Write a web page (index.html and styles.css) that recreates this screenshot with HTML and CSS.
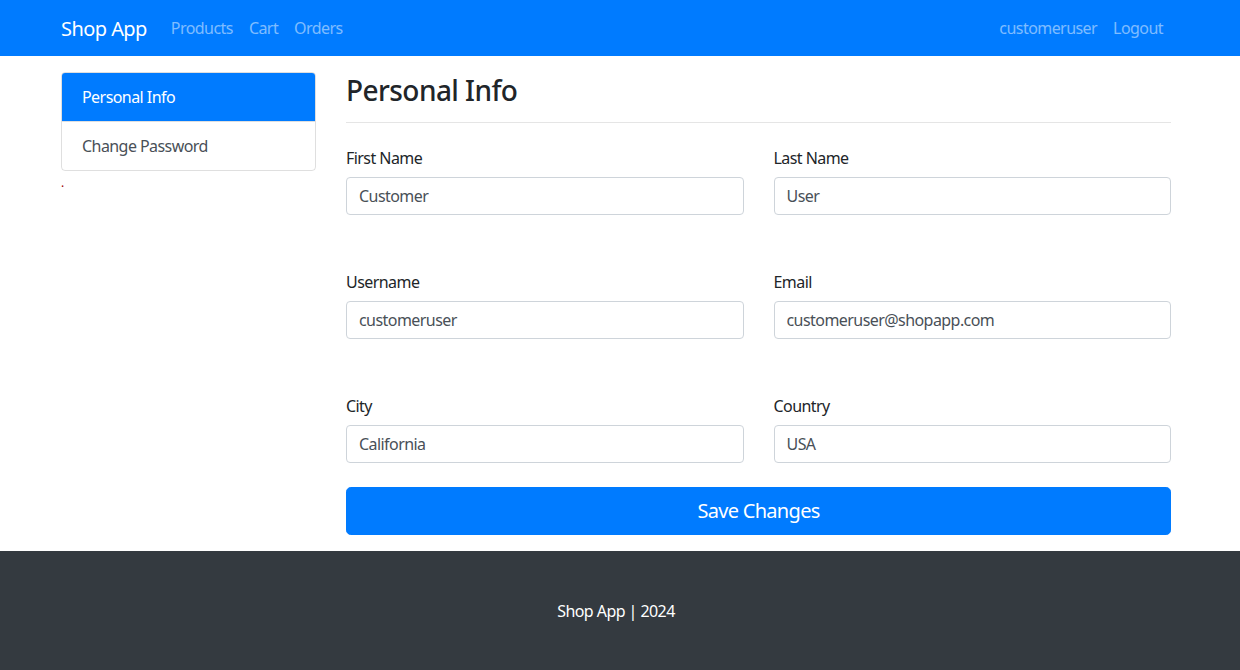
FILE: index.html
```html
<!DOCTYPE html>
<html lang="en">
<head>
<meta charset="utf-8">
<title>Shop App</title>
<link rel="stylesheet" href="styles.css">
</head>
<body>
<nav class="navbar">
  <div class="container nav-inner">
    <a class="brand" href="#">Shop App</a>
    <ul class="nav-links">
      <li><a href="#">Products</a></li>
      <li><a href="#">Cart</a></li>
      <li><a href="#">Orders</a></li>
    </ul>
    <ul class="nav-links nav-right">
      <li><a href="#">customeruser</a></li>
      <li><a href="#">Logout</a></li>
    </ul>
  </div>
</nav>
<main class="container content">
  <aside class="sidebar">
    <div class="list-group">
      <a class="list-item active" href="#">Personal Info</a>
      <a class="list-item" href="#">Change Password</a>
    </div>
    <span class="dot">.</span>
  </aside>
  <section class="main">
    <h3 class="title">Personal Info</h3>
    <form class="form">
      <div class="field">
        <label>First Name</label>
        <input class="input" type="text" value="Customer">
      </div>
      <div class="field">
        <label>Last Name</label>
        <input class="input" type="text" value="User">
      </div>
      <div class="field">
        <label>Username</label>
        <input class="input" type="text" value="customeruser">
      </div>
      <div class="field">
        <label>Email</label>
        <input class="input" type="text" value="customeruser@shopapp.com">
      </div>
      <div class="field">
        <label>City</label>
        <input class="input" type="text" value="California">
      </div>
      <div class="field">
        <label>Country</label>
        <input class="input" type="text" value="USA">
      </div>
      <button class="btn" type="button">Save Changes</button>
    </form>
  </section>
</main>
<footer class="footer">
  <p>Shop App | 2024</p>
</footer>
</body>
</html>
```

FILE: styles.css
```css
* { box-sizing: border-box; }
html, body { margin: 0; padding: 0; }
body {
  font-family: "Segoe UI", "Noto Sans", "Open Sans", sans-serif;
  font-size: 16px;
  line-height: 1.5;
  letter-spacing: -0.035em;
  color: #212529;
  background: #fff;
}
a { text-decoration: none; }
.container {
  width: 1110px;
  margin-left: calc(50% - 559px);
}
.navbar {
  background: #007bff;
  height: 56px;
}
.nav-inner {
  display: flex;
  align-items: center;
  height: 56px;
}
.brand {
  color: #fff;
  font-size: 20px;
  line-height: 30px;
  margin-right: 16px;
  padding-top: 2px;
}
.nav-links {
  display: flex;
  list-style: none;
  margin: 0;
  padding: 0;
}
.nav-links a {
  display: block;
  padding: 8px;
  color: rgba(255,255,255,0.5);
}
.nav-right { margin-left: auto; }
.content {
  display: flex;
  gap: 30px;
  margin-top: 16px;
  margin-bottom: 16px;
}
.sidebar { width: 255px; flex: none; }
.list-group {
  display: flex;
  flex-direction: column;
  border: 1px solid rgba(0,0,0,0.125);
  border-radius: 4px;
  overflow: hidden;
}
.list-item {
  display: block;
  padding: 12px 20px;
  color: #495057;
}
.list-item + .list-item { border-top: 1px solid rgba(0,0,0,0.125); }
.list-item.active {
  background: #007bff;
  color: #fff;
  margin: -1px -1px 0;
  padding: 13px 21px 12px;
  border-radius: 4px 4px 0 0;
}
.dot {
  display: block;
  color: #9b0000;
  font-size: 12px;
  line-height: 12px;
  margin-top: 6px;
}
.main { flex: 1; }
.title {
  font-size: 28px;
  font-weight: 500;
  line-height: 1.2;
  margin: 0;
  padding-top: 2px;
  padding-bottom: 14px;
  border-bottom: 1px solid rgba(0,0,0,0.1);
}
.form {
  display: grid;
  grid-template-columns: 1fr 1fr;
  column-gap: 30px;
  row-gap: 54px;
  margin-top: 22px;
}
.field label {
  display: block;
  padding-top: 1px;
  margin-bottom: 7px;
}
.input {
  display: block;
  width: 100%;
  height: 38px;
  padding: 6px 12px;
  font: inherit;
  letter-spacing: -0.035em;
  color: #495057;
  border: 1px solid #ced4da;
  border-radius: 4px;
  background: #fff;
}
.btn {
  grid-column: 1 / -1;
  margin-top: -30px;
  height: 48px;
  font: inherit;
  font-size: 20px;
  letter-spacing: -0.035em;
  color: #fff;
  background: #007bff;
  border: 1px solid #007bff;
  border-radius: 4.8px;
}
.footer {
  background: #343a40;
  color: #fff;
  padding: 48px 8px 48px 0;
  text-align: center;
}
.footer p { margin: 0; }
```
